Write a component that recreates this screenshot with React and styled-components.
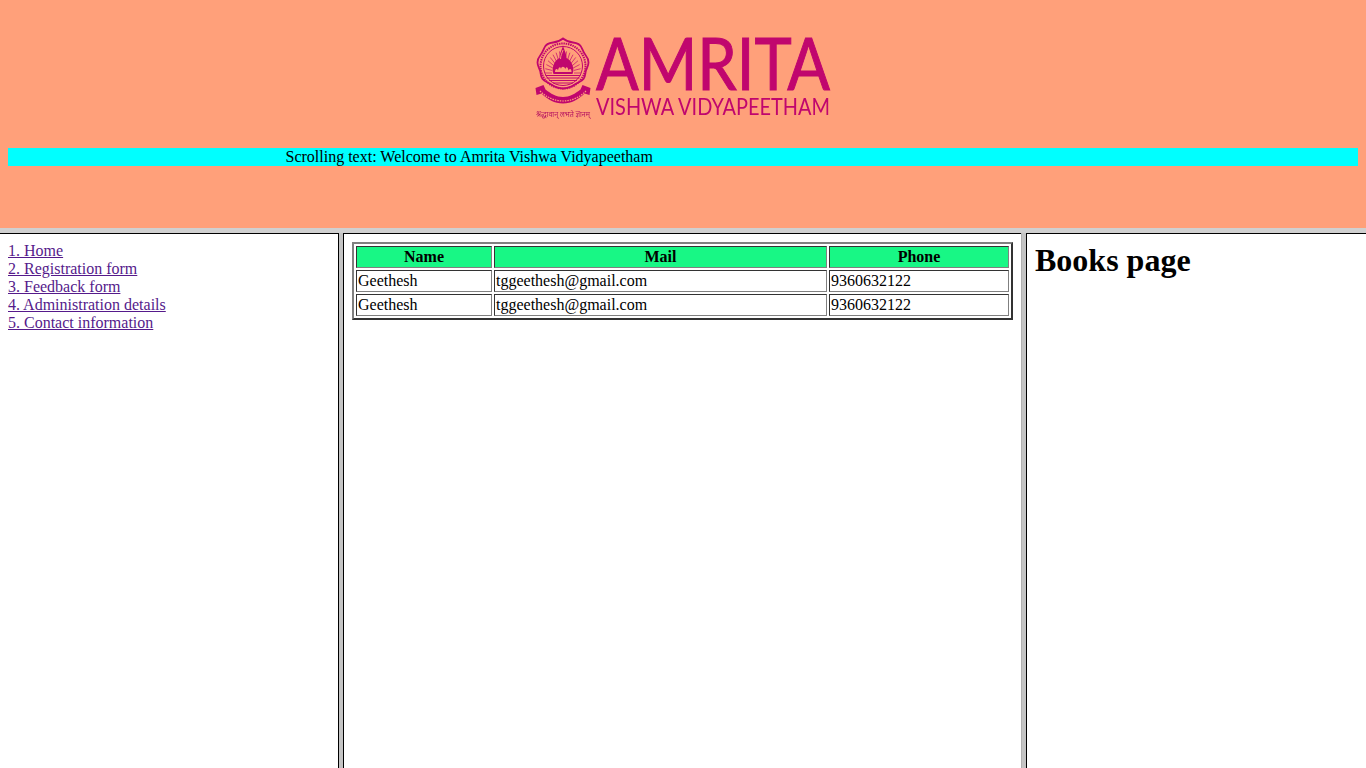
import React from "react";
import styled, { createGlobalStyle } from "styled-components";

const Global = createGlobalStyle`
  html, body { margin: 0; padding: 0; height: 100%; overflow: hidden; }
  body { font-family: "Liberation Serif", "Times New Roman", serif; font-size: 16px; color: #000; background: #fff; }
`;

const Page = styled.div`
  width: 1366px;
  height: 768px;
  display: grid;
  grid-template-rows: 228px 1fr;
  overflow: hidden;
`;

const Header = styled.header`
  background: #ffa07a;
  padding: 37px 8px 0;
`;

const LogoWrap = styled.div`
  height: 111px;
  display: flex;
  justify-content: center;
`;

const LogoSvg = styled.svg`
  overflow: visible;
  filter: blur(0.3px);
`;

const Marquee = styled.div`
  height: 18px;
  line-height: 18px;
  background: #00ffff;
  padding-left: 277.5px;
  white-space: nowrap;
`;

const Columns = styled.div`
  display: grid;
  grid-template-columns: 338px 6px 677px 6px 1fr;
  border-top: 5px solid #d0d0d0;
  min-height: 0;
`;

const Divider = styled.div`
  background: #c4c4c4;
  border-left: 1px solid ${(p) => p.$edge};
  border-right: 1px solid #000;
`;

const Pane = styled.div`
  border-top: 1px solid #000;
  padding: 8px;
  min-width: 0;
`;

const NavLink = styled.a`
  display: block;
  color: #551a8b;
  text-decoration: underline;
  height: 18px;
  line-height: 18px;
`;

const Table = styled.table`
  border-collapse: separate;
  border-spacing: 2px;
  border: 2px solid;
  border-color: #808080 #333 #333 #808080;
  width: 661px;
  table-layout: fixed;
`;

const Th = styled.th`
  background: #18f785;
  padding: 1px;
  border: 1px solid;
  border-color: #333 #808080 #808080 #333;
  height: 18px;
  line-height: 18px;
  font-weight: bold;
`;

const Td = styled.td`
  padding: 1px;
  border: 1px solid;
  border-color: #333 #808080 #808080 #333;
  height: 18px;
  line-height: 18px;
`;

const Title = styled.h1`
  margin: 0;
  font-size: 32px;
  line-height: 37px;
  font-weight: bold;
`;

const INK = "#c0066e";
const BG = "#ffa07a";

const rays = Array.from({ length: 17 }, (_, i) => {
  const a = Math.PI * (1 + i / 16);
  return {
    x1: 28 + 11 * Math.cos(a),
    y1: 36 + 13 * Math.sin(a),
    x2: 28 + 18 * Math.cos(a),
    y2: 36 + 22 * Math.sin(a),
  };
});

const Logo = () => (
  <LogoSvg width="296" height="84" viewBox="0 0 296 84">
    <g fill="none" stroke={INK}>
      <path d="M28 1.500c3 2.500 6 3.500 10 4 4 .5 7 1.500 8.500 5s2 5 4 7.500 3 4.500 3 7.500-1.500 5-2.500 8-.5 6-2.500 8.500-5 3-8 5-6 4.500-12.500 4.500-9.500-2.500-12.500-4.500-6-2.500-8-5-1.500-5.500-2.500-8.500-2.500-5-2.500-8 1-5 3-7.500 2.500-4 4-7.500 4.500-4.500 8.500-5 7-1.500 10-4z" strokeWidth="1.800" />
      <circle cx="28" cy="29" r="22.500" strokeWidth="2" strokeDasharray="1.500 .8" />
      <circle cx="28" cy="29" r="19.500" strokeWidth="1" />
      {rays.map((r, i) => (
        <line key={i} x1={r.x1} y1={r.y1} x2={r.x2} y2={r.y2} strokeWidth=".7" />
      ))}
      <path d="M10.500 38.500h35M11.500 41h33M14 43.500h28M18 46h20" strokeWidth="1.100" />
    </g>
    <g fill={INK}>
      <path d="M28 8c.5 4 3.500 8 3.500 13 3.500 1.500 5.500 5 6.500 9 .5 2 .5 5-.5 7h-19c-1-2-1-5-.5-7 1-4 3-7.500 6.500-9 0-5 3-9 3.500-13z" />
      <path d="M.500 51l8-3 2 4.500c5 4 11 7.500 17.500 7.500s12.500-3.500 17.500-7.500l2-4.500 8 3-1 7-5-1.500c-6 6-13 10-21.500 10s-15.500-4-21.500-10l-5 1.500z" />
    </g>
    <path d="M20 35c0-3 2-4 3-1.500.5-3.500 2.500-4.500 3-1.500.5-3 3-3 4.500 0 .5-3 2.500-2 3 1.500 1.500-2.500 3-1.500 3 1.500z" fill={BG} />
    <path d="M28 13c-.8 3-2.500 5.500-2.500 9" fill="none" stroke={BG} strokeWidth=".9" />
    <path d="M5 54c6 6 14 10 23 10s17-4 23-10" fill="none" stroke={BG} strokeWidth="1.200" strokeDasharray="1.500 1" />
    <text x="1" y="79.500" fontFamily="'Noto Sans', sans-serif" fontSize="8.500" fill="#b4105f" textLength="54" lengthAdjust="spacingAndGlyphs">श्रद्धावान् लभते ज्ञानम्</text>
    <text x="61" y="53" fontFamily="'Lato', sans-serif" fontWeight="400" fontSize="71" fill={INK} stroke={INK} strokeWidth="1" textLength="234" lengthAdjust="spacingAndGlyphs">AMRITA</text>
    <text x="61" y="78" fontFamily="'Lato', sans-serif" fontWeight="400" fontSize="23" fill={INK} textLength="234" lengthAdjust="spacingAndGlyphs">VISHWA VIDYAPEETHAM</text>
  </LogoSvg>
);

const rows = [
  ["Geethesh", "tggeethesh@gmail.com", "9360632122"],
  ["Geethesh", "tggeethesh@gmail.com", "9360632122"],
];
const links = ["1. Home", "2. Registration form", "3. Feedback form", "4. Administration details", "5. Contact information"];

export default function App() {
  return (
    <Page>
      <Global />
      <Header>
        <LogoWrap><Logo /></LogoWrap>
        <Marquee>Scrolling text: Welcome to Amrita Vishwa Vidyapeetham</Marquee>
      </Header>
      <Columns>
        <Pane>
          {links.map((l) => <NavLink href="#" key={l}>{l}</NavLink>)}
        </Pane>
        <Divider $edge="#000" />
        <Pane>
          <Table>
            <colgroup>
              <col style={{ width: 136 }} />
              <col style={{ width: 333 }} />
              <col />
            </colgroup>
            <thead>
              <tr><Th>Name</Th><Th>Mail</Th><Th>Phone</Th></tr>
            </thead>
            <tbody>
              {rows.map((r, i) => (
                <tr key={i}>{r.map((c, j) => <Td key={j}>{c}</Td>)}</tr>
              ))}
            </tbody>
          </Table>
        </Pane>
        <Divider $edge="#b0b0b0" />
        <Pane>
          <Title>Books page</Title>
        </Pane>
      </Columns>
    </Page>
  );
}
